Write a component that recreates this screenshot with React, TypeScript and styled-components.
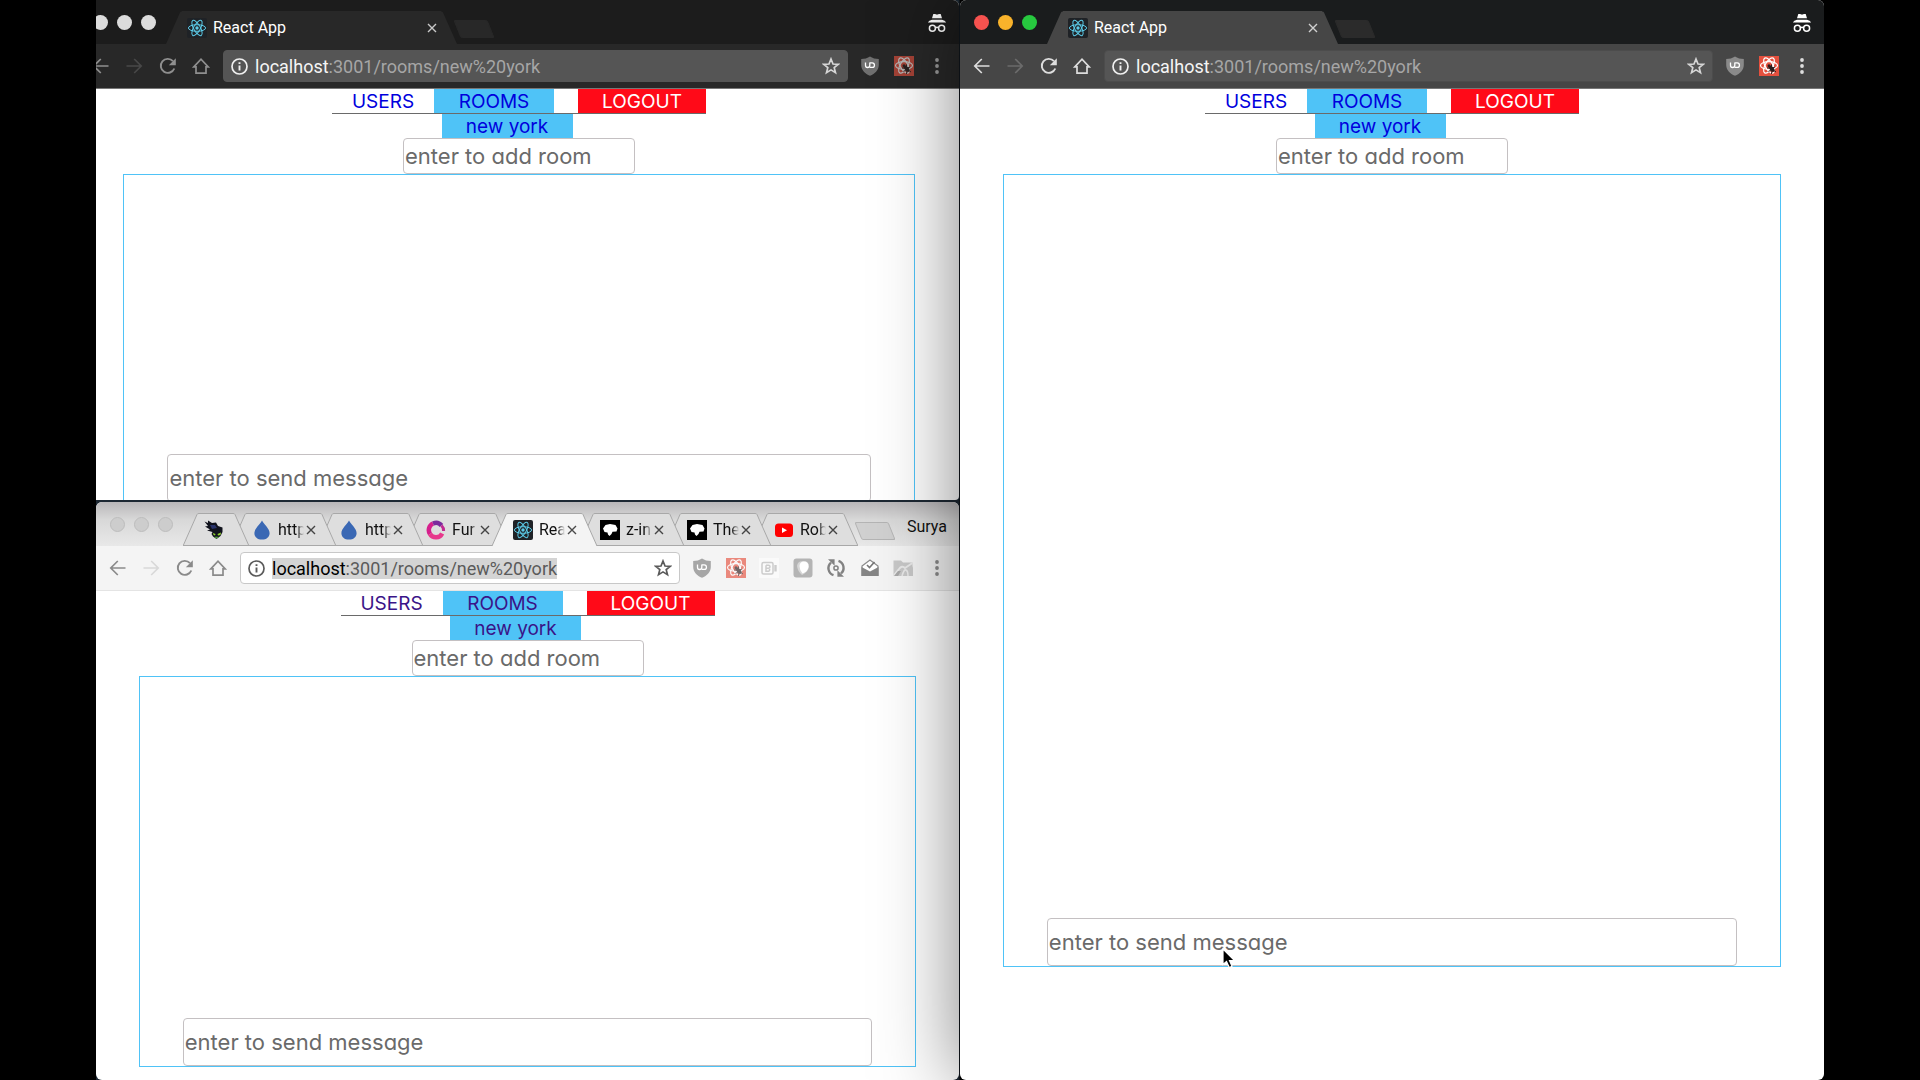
import React, { useId } from 'react';
import styled, { createGlobalStyle, ThemeProvider, useTheme } from 'styled-components';

const GlobalStyle = createGlobalStyle`
  *, *::before, *::after { box-sizing: border-box; }
  html, body { margin: 0; background: #000; }
  button, input { font: inherit; color: inherit; }
`;

const darkInactive = {
  title: '#1c1c1c', toolbar: '#282828', tab: '#282828', idleTab: '#282828', tabLine: 'transparent',
  newTab: '#282828', newTabLine: '#282828', tabText: '#ffffff', field: '#555555', fieldLine: '#555555',
  nav: '#8f8f8f', navOff: '#484848', host: '#f5f5f5', path: '#a6a6a6', mark: 'transparent', info: '#f0f0f0',
  star: '#d6d6d6', edge: '#777777', lights: ['#dcdcdc', '#dcdcdc', '#dcdcdc'], lightLine: 'transparent',
  link: '#0000dd', fade: 0.65, dots: '#9a9a9a', shield: '#707070',
};
const light = {
  title: 'linear-gradient(#b9b7b9, #d8d8d8 40%, #e8e8e8)', toolbar: '#f4f4f4', tab: '#f4f4f4', idleTab: '#dedede',
  tabLine: '#a8a8a8', newTab: '#d0d0d0', newTabLine: '#b4b4b4', tabText: '#111111', field: '#ffffff',
  fieldLine: '#c8c8c8', nav: '#8a8a8a', navOff: '#d8d8d8', host: '#000000', path: '#5a5a5a', mark: '#d4d4d4',
  star: '#5a5a5a', info: '#5a5a5a', edge: '#e4e4e4', lights: ['#cdcdcd', '#cdcdcd', '#cdcdcd'], lightLine: '#bdbdbd',
  link: '#3a1488', fade: 0.65, dots: '#8a8a8a', shield: '#a6a6a6',
};
type Palette = typeof light;
const darkActive: Palette = {
  ...darkInactive,
  title: '#1a1c1d', toolbar: '#464646', tab: '#464646', newTab: '#2b2b2b', newTabLine: '#2b2b2b',
  fieldLine: '#4c4c4c', nav: '#dddddd', navOff: '#6b6b6b', lights: ['#f6524f', '#f9b32b', '#27c93f'],
  fade: 1, dots: '#dddddd', shield: '#8a8a8a',
};

const Desktop = styled.main`
  position: relative;
  display: grid;
  grid-template-columns: minmax(0, 1fr) minmax(0, 1fr);
  height: 100vh;
  padding: 0 5%;
  overflow: hidden;
  background: #000;
`;
const LeftHalf = styled.div`
  display: grid;
  grid-template-rows: minmax(0, 500fr) minmax(0, 578fr);
  gap: 2px;
  min-height: 0;
  overflow: hidden;
  background: #1d2833;
  border-right: 1px solid #10161c;
`;
const Window = styled.section<{ $shadow?: boolean; $shift?: boolean; $round: string }>`
  display: flex;
  flex-direction: column;
  min-height: 0;
  min-width: 0;
  overflow: hidden;
  background: #fff;
  margin-left: ${p => (p.$shift ? '-17px' : '0')};
  border-radius: ${p => p.$round};
  z-index: ${p => (p.$shadow ? 1 : 0)};
  box-shadow: ${p => (p.$shadow ? '0 0 80px rgba(0, 0, 0, 0.5)' : 'none')};
`;
const TitleBar = styled.header`
  display: flex;
  align-items: flex-end;
  flex: none;
  height: 44px;
  padding: 0 12px;
  background: ${p => (p.theme as Palette).title};
`;
const Lights = styled.div`
  display: flex;
  align-self: flex-start;
  gap: 9px;
  width: 75px;
  padding: 15px 0 0 2px;
`;
const Light = styled.button<{ $color: string }>`
  width: 15px;
  height: 15px;
  padding: 0;
  border-radius: 50%;
  border: 1px solid ${p => (p.theme as Palette).lightLine};
  background: ${p => p.$color};
  background-clip: border-box;
`;
const Tabs = styled.nav`
  display: flex;
  align-items: flex-end;
  isolation: isolate;
`;
const TabShell = styled.div<{ $level: number }>`
  position: relative;
  z-index: ${p => p.$level};
  display: flex;
  height: 33px;
  & + & { margin-left: -18px; }
`;
const TabBody = styled.div<{ $width: number; $active: boolean }>`
  display: flex;
  align-items: center;
  gap: 6px;
  width: ${p => p.$width}px;
  padding: 0 4px 0 5px;
  border-top: 1px solid ${p => (p.theme as Palette).tabLine};
  border-bottom: 1px solid ${p => (p.$active ? 'transparent' : (p.theme as Palette).tabLine)};
  background: ${p => (p.$active ? (p.theme as Palette).tab : (p.theme as Palette).idleTab)};
  color: ${p => (p.theme as Palette).tabText};
`;
const TabTitle = styled.span<{ $fade: boolean }>`
  flex: 1;
  min-width: 0;
  margin-right: ${p => (p.$fade ? '-4px' : '0')};
  overflow: hidden;
  white-space: nowrap;
  font: 400 16px/24px Roboto, sans-serif;
  mask-image: ${p => (p.$fade ? 'linear-gradient(to right, #000 70%, transparent)' : 'none')};
`;
const IconButton = styled.button`
  display: flex;
  align-items: center;
  justify-content: center;
  flex: none;
  padding: 0;
  border: 0;
  background: none;
`;
const NewTab = styled.button`
  width: 34px;
  height: 18px;
  margin: 0 0 6px 0;
  padding: 0;
  border: 1px solid ${p => (p.theme as Palette).newTabLine};
  border-radius: 2px;
  background: ${p => (p.theme as Palette).newTab};
  transform: skewX(22deg);
`;
const Corner = styled.div`
  display: flex;
  align-self: flex-start;
  margin-left: auto;
  padding-top: 13px;
`;
const Profile = styled.button`
  padding: 0;
  border: 0;
  background: none;
  font: 400 16px/24px Roboto, sans-serif;
  color: #111;
`;
const Toolbar = styled.div`
  display: flex;
  align-items: center;
  flex: none;
  height: 45px;
  padding: 0 12px 0 12px;
  background: ${p => (p.theme as Palette).toolbar};
  border-bottom: 1px solid ${p => (p.theme as Palette).edge};
  color: ${p => (p.theme as Palette).nav};
`;
const IconRow = styled.div<{ $width: number }>`
  display: flex;
  flex: none;
  justify-content: space-between;
  width: ${p => p.$width}px;
`;
const Omnibox = styled.div`
  display: flex;
  align-items: center;
  flex: 1;
  min-width: 0;
  height: 32px;
  margin: 0 12px;
  padding: 0 7px;
  gap: 7px;
  border: 1px solid ${p => (p.theme as Palette).fieldLine};
  border-radius: 4px;
  background: ${p => (p.theme as Palette).field};
  color: ${p => (p.theme as Palette).star};
`;
const Address = styled.div`
  flex: 1;
  min-width: 0;
  overflow: hidden;
  white-space: nowrap;
  font: 400 18px/21px Roboto, sans-serif;
  color: ${p => (p.theme as Palette).path};
`;
const Selected = styled.span`
  background: ${p => (p.theme as Palette).mark};
`;
const Host = styled.span`
  color: ${p => (p.theme as Palette).host};
`;

const Page = styled.div`
  display: flex;
  flex-direction: column;
  align-items: center;
  flex: 1;
  min-height: 0;
  overflow: hidden;
  font-family: Inter, "Century Gothic", sans-serif;
  font-feature-settings: "cv11";
`;
const Menu = styled.nav`
  display: flex;
  flex: none;
  border-bottom: 1px solid #6a6a6a;
`;
const MenuLink = styled.a<{ $kind?: 'room' | 'logout'; $width: number }>`
  width: ${p => p.$width}px;
  padding-top: 2px;
  margin-left: ${p => (p.$kind === 'logout' ? '24px' : '0')};
  font-size: 19px;
  line-height: 22px;
  text-align: center;
  text-decoration: none;
  color: ${p => (p.$kind === 'logout' ? '#fff' : (p.theme as Palette).link)};
  background: ${p => (p.$kind === 'logout' ? '#ff0a18' : p.$kind === 'room' ? '#4fc3f7' : 'transparent')};
`;
const SubMenu = styled.nav`
  display: flex;
  flex: none;
  margin-right: 24px;
`;
const Field = styled.input`
  flex: none;
  padding: 0 1px;
  border: 1px solid #c4c0c2;
  border-radius: 4px;
  background: #fff;
  font-size: 22px;
  color: #222;
  outline: 0;
  &::placeholder { color: #6a6a6a; opacity: 1; }
`;
const RoomField = styled(Field)`
  width: 232px;
  height: 36px;
`;
const ChatBox = styled.section`
  display: flex;
  flex-direction: column;
  align-items: center;
  justify-content: flex-end;
  flex: 0 0 80%;
  width: 90%;
  border: 1px solid #4fc3f7;
`;
const MessageField = styled(Field)`
  width: 89%;
  height: 48px;
`;
const Pointer = styled.svg`
  position: absolute;
  left: 1221px;
  top: 947px;
  z-index: 2;
`;

const Atom = ({ tile, size = 20 }: { tile?: boolean; size?: number }) => (
  <svg width={size} height={size} viewBox="0 0 20 20" fill="none" stroke="#5ccbe8" strokeWidth="1">
    {tile && <rect width="20" height="20" rx="2" fill="#1f2226" stroke="none" />}
    <ellipse cx="10" cy="10" rx="8.6" ry="3.3" />
    <ellipse cx="10" cy="10" rx="8.6" ry="3.3" transform="rotate(60 10 10)" />
    <ellipse cx="10" cy="10" rx="8.6" ry="3.3" transform="rotate(120 10 10)" />
    <circle cx="10" cy="10" r="1.7" fill="#5ccbe8" stroke="none" />
  </svg>
);
const Drop = () => (
  <svg width="20" height="20" viewBox="0 0 20 20">
    <path d="M10 0.5C12 4.5 17.6 8.6 17.6 13.2C17.6 17 14.4 19.6 10 19.6S2.4 17 2.4 13.2C2.4 8.6 8 4.5 10 .5Z" fill="#3a68b4" />
  </svg>
);
const Hero = () => (
  <svg width="20" height="20" viewBox="0 0 20 20">
    <path d="M.5 1.500L4 3L4 .5L8 3L12 2.500L14 6L18.500 7.500L18.500 12L16.500 16L12.500 19L9 16.500L7.500 14L8.500 12L3 10.500L6 9.500L1 6.500L4 6Z" fill="#10121c" />
    <path d="M6 5L11 5L13 8L8 9Z" fill="#29336a" />
    <path d="M9 13L11.500 14L11 15.500L9.500 15Z M13.500 14L17 12.500L16.500 15L14 15.500Z" fill="#8fd030" />
    <path d="M10 17L12.500 16.500L15 17L12.500 18.800Z" fill="#4f9a3c" />
  </svg>
);
const Ring = () => (
  <svg width="20" height="20" viewBox="0 0 20 20" fill="none" strokeWidth="4.500">
    <path d="M16.200 13.500A7 7 0 0 1 4 14" stroke="#e7388c" />
    <path d="M4 14A7.200 7.200 0 0 1 7 3.500" stroke="#d61f8d" />
    <path d="M7 3.500A7.200 7.200 0 0 1 15.500 5.500" stroke="#7b2a9c" />
    <path d="M15.500 5.500A7.200 7.200 0 0 1 17.600 11" stroke="#c22a92" strokeWidth="3" />
  </svg>
);
const Bison = () => (
  <svg width="20" height="20" viewBox="0 0 20 20">
    <rect width="20" height="20" fill="#000" />
    <path d="M3 8.500L5.500 5L10 4L15.500 5L17.500 8.500L16.500 11.500L12.500 11.800L11.500 14L9.500 16L8 14.500L7.500 12.500L4.500 12Z" fill="#fff" />
  </svg>
);
const Tube = () => (
  <svg width="20" height="20" viewBox="0 0 20 20">
    <rect x="1" y="3.500" width="18" height="13.500" rx="3.500" fill="#f00" />
    <path d="M8 7.400V13L13 10.200Z" fill="#fff" />
  </svg>
);
const Cross = () => (
  <svg width="10" height="10" viewBox="0 0 10 10" stroke="currentColor" strokeWidth="1.400" opacity="0.75">
    <path d="M1 1L9 9M9 1L1 9" />
  </svg>
);
const Arrow = ({ flip }: { flip?: boolean }) => (
  <svg width="20" height="20" viewBox="0 0 20 20" fill="none" stroke="currentColor" strokeWidth="1.700">
    <path d={flip ? 'M2.500 10H17M10.200 3L17.200 10L10.200 17' : 'M17.500 10H3M9.800 3L2.800 10L9.800 17'} />
  </svg>
);
const Reload = () => (
  <svg width="20" height="20" viewBox="0 0 20 20" fill="none" stroke="currentColor" strokeWidth="1.900">
    <path d="M16.300 12.500A7 7 0 1 1 15 5.200" />
    <path d="M17.800 2.200V9.200H10.800Z" fill="currentColor" stroke="none" />
  </svg>
);
const Home = () => (
  <svg width="20" height="20" viewBox="0 0 20 20" fill="none" stroke="currentColor" strokeWidth="1.700">
    <path d="M2.800 10.800L10 3.200L17.200 10.800H15V17.200H5V10.800Z" />
  </svg>
);
const Info = () => {
  const t = useTheme() as Palette;
  return (
    <svg width="17" height="17" viewBox="0 0 17 17" fill="none" stroke={t.info} strokeWidth="1.700">
      <circle cx="8.500" cy="8.500" r="7.500" />
      <path d="M8.500 7.500V12.500M8.500 4.300V6" strokeWidth="1.900" />
    </svg>
  );
};
const Star = () => (
  <svg width="18" height="18" viewBox="0 0 18 18" fill="none" stroke="currentColor" strokeWidth="1.700">
    <path d="M9 2L11 7L16.200 7.300L12.200 10.600L13.500 15.700L9 12.900L4.500 15.700L5.800 10.600L1.800 7.300L7 7Z" />
  </svg>
);
const Shield = () => {
  const t = useTheme() as Palette;
  return (
    <svg width="20" height="20" viewBox="0 0 20 20">
      <path d="M10 .5C12.500 2.200 15.500 3 18.800 3V9C18.800 14 15 17.800 10 19.700C5 17.800 1.200 14 1.200 9V3C4.500 3 7.500 2.200 10 .5Z" fill={t.shield} />
      <path d="M5.500 6.500V9.300Q5.500 11.500 7.500 11.500Q9.800 11.500 9.800 9.300V6.500M9.800 6.900H12.200A2.200 2.200 0 0 1 12.200 11.400H9.800" fill="none" stroke="#fff" strokeWidth="1.300" />
    </svg>
  );
};
const Bug = () => {
  const t = useTheme() as Palette;
  return (
    <svg width="20" height="20" viewBox="0 0 20 20" opacity={t.fade} fill="none">
      <rect width="20" height="20" fill="#e5503e" />
      <g stroke="#fff" strokeWidth="1.200">
        <ellipse cx="10" cy="9.500" rx="8.500" ry="3.800" />
        <ellipse cx="10" cy="9.500" rx="8.500" ry="3.800" transform="rotate(60 10 9.500)" />
        <ellipse cx="10" cy="9.500" rx="8.500" ry="3.800" transform="rotate(120 10 9.500)" />
      </g>
      <ellipse cx="12.800" cy="12.800" rx="2" ry="3.500" fill="#2a1c1c" transform="rotate(-40 12.800 12.800)" />
      <circle cx="10" cy="9.800" r="1.500" fill="#2a1c1c" />
      <path d="M8 12L11 12M9.500 15.500L12 14M12.500 8.500L12.500 11M16 11L13.500 12M12.500 18L13 14.500M17 16L14 14" stroke="#2a1c1c" />
    </svg>
  );
};
const Camera = () => (
  <svg width="20" height="20" viewBox="0 0 20 20" fill="none" stroke="#cccccc" strokeWidth="1.500">
    <rect width="20" height="20" fill="#fafafa" stroke="none" />
    <rect x="3" y="4.500" width="11" height="11.500" rx="1.500" />
    <path d="M16.500 7V13.500" strokeWidth="2.400" />
    <path d="M7 7.200V13.300H9.500A1.600 1.600 0 0 0 9.500 10.200H7.200M9.500 10.200A1.400 1.400 0 0 0 9.500 7.200H7" />
  </svg>
);
const Leaf = () => (
  <svg width="20" height="20" viewBox="0 0 20 20">
    <rect x=".5" y=".5" width="19" height="19" rx="3" fill="#b4b4b4" />
    <path d="M4 8Q4.500 2.800 10 3.200Q16 2.800 16 8.500Q15.500 14 9 17Q4.500 13 4 8Z" fill="#d6d6d6" />
    <path d="M6.500 8Q7 3.200 11 3.500Q15.800 3.500 15.500 9Q14.500 14 9.500 15.500Q6.500 12 6.500 8Z" fill="#fff" />
  </svg>
);
const Sync = () => (
  <svg width="20" height="20" viewBox="0 0 20 20" fill="none" stroke="#828282" strokeWidth="2.400">
    <path d="M7.500 17.200A7.400 7.400 0 0 1 5 4.600" />
    <path d="M12.500 2.800A7.400 7.400 0 0 1 15 15.400" />
    <path d="M2 1.200H8.600V7.800Z M18 18.800H11.400V12.200Z" fill="#828282" stroke="none" />
    <circle cx="10" cy="10" r="2.100" strokeWidth="1.500" />
  </svg>
);
const Mail = () => (
  <svg width="20" height="20" viewBox="0 0 20 20">
    <path d="M2 8L10 2L18 8V17.500H2Z" fill="#fff" stroke="#8a8a8a" strokeWidth="1.200" />
    <path d="M1.500 9L10 13.500L18.500 9V18H1.500Z" fill="#858585" />
    <path d="M7 7L9.500 9.500L14.500 4" fill="none" stroke="#777" strokeWidth="1.600" />
  </svg>
);
const Folder = () => (
  <svg width="20" height="20" viewBox="0 0 20 20">
    <path d="M.5 2.500H8L10 4.500H19.500V8L20 10V18H.5Z" fill="#c8c8c8" />
    <path d="M.5 18L6 11Q9 7 12 10L19.500 5" fill="none" stroke="#e9e9e9" strokeWidth="2" />
    <path d="M9 18Q11 11 13 12T15 18" fill="none" stroke="#e9e9e9" strokeWidth="1.500" />
    <path d="M1 18L5 13H8L5 18Z" fill="#a8a8a8" />
  </svg>
);
const Dots = () => {
  const t = useTheme() as Palette;
  return (
    <svg width="20" height="20" viewBox="0 0 20 20" fill={t.dots}>
      <circle cx="10" cy="4" r="1.900" /><circle cx="10" cy="10" r="1.900" /><circle cx="10" cy="16" r="1.900" />
    </svg>
  );
};
const Incognito = () => (
  <svg width="20" height="20" viewBox="0 0 20 20" fill="#fff" role="img" aria-label="Incognito">
    <path d="M6.300 1H8.200Q10 2 11.800 1H13.700L15 5.200H5Z" />
    <path d="M.8 9.500Q2 7.500 5 6.800H15Q18 7.500 19.200 9.500Z" />
    <g fill="none" stroke="#fff" strokeWidth="1.500">
      <circle cx="5.400" cy="15.300" r="3" /><circle cx="14.600" cy="15.300" r="3" /><path d="M8.400 14.800Q10 13.800 11.600 14.800" />
    </g>
  </svg>
);

const Slope = ({ right, active }: { right?: boolean; active: boolean }) => {
  const t = useTheme() as Palette;
  return (
    <svg width="16" height="33" viewBox="0 0 16 33">
      <g transform={right ? 'translate(16 0) scale(-1 1)' : undefined}>
        <path d="M0 33L14 1.500Q14.300.5 16 .5V33Z" fill={active ? t.tab : t.idleTab} />
        <path d="M0 33L14 1.500Q14.300.5 16 .5" fill="none" stroke={t.tabLine} />
        {!active && <path d="M0 32.500H16" stroke={t.tabLine} />}
      </g>
    </svg>
  );
};

type TabInfo = { icon: React.ReactNode; title?: string; active?: boolean; width: number };
const TabItem = ({ tab, level }: { tab: TabInfo; level: number }) => (
  <TabShell $level={tab.active ? 20 : level}>
    <Slope active={!!tab.active} />
    <TabBody $width={tab.width} $active={!!tab.active}>
      {tab.icon}
      {tab.title && <TabTitle $fade={tab.width < 100}>{tab.title}</TabTitle>}
      {tab.title && <IconButton aria-label="Close tab"><Cross /></IconButton>}
    </TabBody>
    <Slope right active={!!tab.active} />
  </TabShell>
);

const RoomPage = ({ name }: { name: string }) => {
  const id = useId();
  return (
    <Page>
      <Menu aria-label={name}>
        <MenuLink href="#users" $width={102}>USERS</MenuLink>
        <MenuLink href="#rooms" $width={120} $kind="room">ROOMS</MenuLink>
        <MenuLink href="#logout" $width={128} $kind="logout">LOGOUT</MenuLink>
      </Menu>
      <SubMenu>
        <MenuLink href="#new-york" $width={131} $kind="room">new york</MenuLink>
      </SubMenu>
      <RoomField id={id + 'room'} aria-label="Add room" placeholder="enter to add room" />
      <ChatBox>
        <MessageField id={id + 'message'} aria-label="Send message" placeholder="enter to send message" />
      </ChatBox>
    </Page>
  );
};

type BrowserProps = {
  name: string; theme: Palette; tabs: TabInfo[]; corner: React.ReactNode; extensions: React.ReactNode[];
  shadow?: boolean; shift?: boolean; round: string;
};
const Browser = ({ name, theme, tabs, corner, extensions, shadow, shift, round }: BrowserProps) => (
  <ThemeProvider theme={theme}>
    <Window $shadow={shadow} $shift={shift} $round={round} aria-label={name}>
      <TitleBar>
        <Lights>
          {['Close', 'Minimise', 'Zoom'].map((label, i) => <Light key={label} aria-label={label} $color={theme.lights[i]} />)}
        </Lights>
        <Tabs>
          {tabs.map((tab, i) => <TabItem key={i} tab={tab} level={tabs.length - i} />)}
          <NewTab aria-label="New tab" />
        </Tabs>
        <Corner>{corner}</Corner>
      </TitleBar>
      <Toolbar>
        <IconRow $width={120}>
          <IconButton aria-label="Back"><Arrow /></IconButton>
          <IconButton aria-label="Forward" style={{ color: theme.navOff }}><Arrow flip /></IconButton>
          <IconButton aria-label="Reload"><Reload /></IconButton>
          <IconButton aria-label="Home"><Home /></IconButton>
        </IconRow>
        <Omnibox>
          <Info />
          <Address><Selected><Host>localhost</Host>:3001/rooms/new%20york</Selected></Address>
          <IconButton aria-label="Bookmark"><Star /></IconButton>
        </Omnibox>
        <IconRow $width={extensions.length > 3 ? 255 : 87}>
          {extensions.map((icon, i) => <IconButton key={i} aria-label={'Extension ' + (i + 1)}>{icon}</IconButton>)}
        </IconRow>
      </Toolbar>
      <RoomPage name={name} />
    </Window>
  </ThemeProvider>
);

const lightTabs: TabInfo[] = [
  { icon: <Hero />, width: 34 },
  { icon: <Drop />, title: 'http', width: 73 },
  { icon: <Drop />, title: 'http', width: 73 },
  { icon: <Ring />, title: 'Fur', width: 73 },
  { icon: <Atom tile />, title: 'Rea', width: 73, active: true },
  { icon: <Bison />, title: 'z-in', width: 73 },
  { icon: <Bison />, title: 'The', width: 73 },
  { icon: <Tube />, title: 'Rob', width: 73 },
];
const darkTabs: TabInfo[] = [{ icon: <Atom tile />, title: 'React App', width: 259, active: true }];

export default function App() {
  return (
    <>
      <GlobalStyle />
      <Desktop>
        <LeftHalf>
          <Browser name="Room window one" theme={darkInactive} tabs={darkTabs} corner={<Incognito />} shift round="0 6px 4px 0"
            extensions={[<Shield />, <Bug />, <Dots />]} />
          <Browser name="Room window two" theme={light} tabs={lightTabs} corner={<Profile>Surya</Profile>} round="6px"
            extensions={[<Shield />, <Bug />, <Camera />, <Leaf />, <Sync />, <Mail />, <Folder />, <Dots />]} />
        </LeftHalf>
        <Browser name="Room window three" theme={darkActive} tabs={darkTabs} corner={<Incognito />} shadow round="6px"
          extensions={[<Shield />, <Bug />, <Dots />]} />
        <Pointer width="16" height="24" viewBox="0 0 16 24">
          <path d="M2 2V17.500L5.500 14.500L8.300 20.500L11 19.300L8.500 13.500H13.500Z" fill="#000" stroke="#fff" strokeWidth="1.200" />
        </Pointer>
      </Desktop>
    </>
  );
}
